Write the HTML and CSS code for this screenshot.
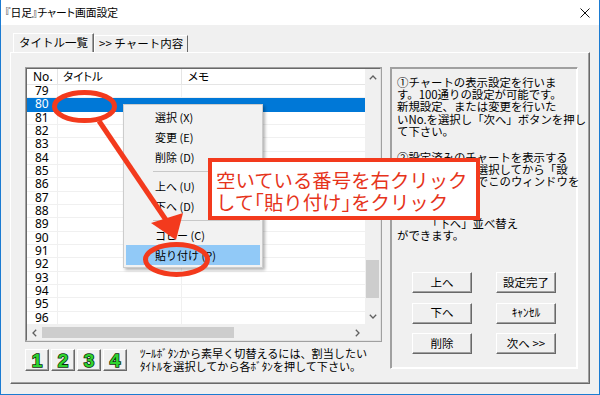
FILE: index.html
```html
<!DOCTYPE html>
<html lang="ja">
<head>
<meta charset="utf-8">
<title>チャート画面設定</title>
<link rel="stylesheet" href="styles.css">
</head>
<body>
<div class="window">
  <div class="titlebar">
    <span class="title">『日足』チャート画面設定</span>
    <svg class="close" width="10" height="10" viewBox="0 0 10 10"><path d="M0.5 0.5L9.5 9.5M9.5 0.5L0.5 9.5" stroke="#111" stroke-width="1"/></svg>
  </div>
  <div class="client">
    <div class="tabs">
      <div class="tab active">タイトル一覧</div>
      <div class="tab">&gt;&gt; チャート内容</div>
    </div>
    <div class="panel">
      <div class="leftcol">
        <div class="listview">
          <div class="lv-inner">
            <div class="lv-main">
              <div class="lv-grid">
                <div class="lv-header"><div class="c1">No.</div><div class="c2">タイトル</div><div class="c3">メモ</div></div>
                <div class="row"><div class="c1">79</div><div class="c2"></div><div class="c3"></div></div>
                <div class="row sel"><div class="c1">80</div><div class="c2"></div><div class="c3"></div></div>
                <div class="row"><div class="c1">81</div><div class="c2"></div><div class="c3"></div></div>
                <div class="row"><div class="c1">82</div><div class="c2"></div><div class="c3"></div></div>
                <div class="row"><div class="c1">83</div><div class="c2"></div><div class="c3"></div></div>
                <div class="row"><div class="c1">84</div><div class="c2"></div><div class="c3"></div></div>
                <div class="row"><div class="c1">85</div><div class="c2"></div><div class="c3"></div></div>
                <div class="row"><div class="c1">86</div><div class="c2"></div><div class="c3"></div></div>
                <div class="row"><div class="c1">87</div><div class="c2"></div><div class="c3"></div></div>
                <div class="row"><div class="c1">88</div><div class="c2"></div><div class="c3"></div></div>
                <div class="row"><div class="c1">89</div><div class="c2"></div><div class="c3"></div></div>
                <div class="row"><div class="c1">90</div><div class="c2"></div><div class="c3"></div></div>
                <div class="row"><div class="c1">91</div><div class="c2"></div><div class="c3"></div></div>
                <div class="row"><div class="c1">92</div><div class="c2"></div><div class="c3"></div></div>
                <div class="row"><div class="c1">93</div><div class="c2"></div><div class="c3"></div></div>
                <div class="row"><div class="c1">94</div><div class="c2"></div><div class="c3"></div></div>
                <div class="row"><div class="c1">95</div><div class="c2"></div><div class="c3"></div></div>
                <div class="row"><div class="c1">96</div><div class="c2"></div><div class="c3"></div></div>
              </div>
              <div class="vscroll">
                <div class="sb-arrow v"><svg width="8" height="5" viewBox="0 0 8 5"><path d="M0.8 4.2L4 1L7.2 4.2" fill="none" stroke="#606060" stroke-width="1.3"/></svg></div>
                <div class="vtrack"><div class="vthumb"></div></div>
                <div class="sb-arrow v"><svg width="8" height="5" viewBox="0 0 8 5"><path d="M0.8 0.8L4 4L7.2 0.8" fill="none" stroke="#606060" stroke-width="1.3"/></svg></div>
              </div>
            </div>
            <div class="hscroll-row">
              <div class="hscroll">
                <div class="sb-arrow h"><svg width="5" height="8" viewBox="0 0 5 8"><path d="M4.2 0.8L1 4L4.2 7.2" fill="none" stroke="#606060" stroke-width="1.3"/></svg></div>
                <div class="htrack"><div class="hthumb"></div></div>
                <div class="sb-arrow h"><svg width="5" height="8" viewBox="0 0 5 8"><path d="M0.8 0.8L4 4L0.8 7.2" fill="none" stroke="#606060" stroke-width="1.3"/></svg></div>
              </div>
              <div class="corner"></div>
            </div>
          </div>
        </div>
        <div class="toolrow">
          <div class="numbtns">
            <div class="numbtn">1</div>
            <div class="numbtn">2</div>
            <div class="numbtn">3</div>
            <div class="numbtn">4</div>
          </div>
          <p class="hint">ﾂｰﾙﾎﾞﾀﾝから素早く切替えるには、割当したい<br>ﾀｲﾄﾙを選択してから各ﾎﾞﾀﾝを押して下さい。</p>
        </div>
      </div>
      <div class="infobox">
        <p class="para p1">①チャートの表示設定を行いま<br>す。100通りの設定が可能です。<br>新規設定、または変更を行いた<br>いNo.を選択し「次へ」ボタンを押し<br>て下さい。</p>
        <p class="para p2">②設定済みのチャートを表示する<br><span class="masked">タイトル番号を</span>選択してから「設<br><span class="masked">定完了」ボタン</span>でこのウィンドウを<br><span class="masked">閉じて下さい。</span></p>
        <p class="para p3"><span class="masked short">③「上へ」</span>「下へ」並べ替え<br>ができます。</p>
        <div class="btngrid">
          <div class="btn">上へ</div>
          <div class="btn">設定完了</div>
          <div class="btn">下へ</div>
          <div class="btn">ｷｬﾝｾﾙ</div>
          <div class="btn">削除</div>
          <div class="btn">次へ &gt;&gt;</div>
        </div>
      </div>
    </div>
  </div>

  <div class="ctxmenu">
    <div class="mi">選択 (X)</div>
    <div class="mi">変更 (E)</div>
    <div class="mi">削除 (D)</div>
    <div class="msep"></div>
    <div class="mi">上へ (U)</div>
    <div class="mi">下へ (D)</div>
    <div class="msep"></div>
    <div class="mi">コピー (C)</div>
    <div class="mi hot">貼り付け (P)</div>
  </div>

  <svg class="annot" width="600" height="395" viewBox="0 0 600 395">
    <ellipse cx="84.5" cy="106.5" rx="30" ry="14" fill="none" stroke="#f33a1d" stroke-width="5"/>
    <line x1="99" y1="121" x2="166" y2="220" stroke="#f33a1d" stroke-width="5"/>
    <polygon points="176,240 151,223 183,213" fill="#f33a1d"/>
    <ellipse cx="176.5" cy="259.5" rx="31" ry="15" fill="none" stroke="#f33a1d" stroke-width="5"/>
  </svg>

  <div class="callout">空いている番号を右クリック<br>して<span class="hb">「</span>貼り付け<span class="hb">」</span>をクリック</div>
</div>
</body>
</html>
```

FILE: styles.css
```css
* { box-sizing: border-box; margin: 0; padding: 0; }
html, body { width: 600px; height: 395px; overflow: hidden; }
body {
  font-family: "Noto Sans CJK JP", "Noto Sans", sans-serif;
  font-size: 11.5px;
  color: #000;
  background: #fff;
}
.window {
  position: relative;
  width: 600px;
  height: 395px;
  border: 1px solid #1b7bd2;
  border-top: 0;
  background: #f0f0f0;
  display: flex;
  flex-direction: column;
}
.titlebar {
  flex: none;
  height: 25px;
  background: #fff;
  display: flex;
  align-items: center;
  justify-content: space-between;
  padding: 0 9px 0 4px;
}
.title { font-size: 10.8px; font-feature-settings: "palt"; line-height: 1; }
.client {
  flex: 1;
  padding: 6px 9px 0 9px;
  display: flex;
  flex-direction: column;
}
.tabs {
  height: 21px;
  display: flex;
  align-items: flex-end;
  padding-left: 3px;
}
.tab {
  height: 17px;
  line-height: 15px;
  padding: 0 4px;
  border: 1px solid;
  border-color: #fff #696969 transparent #fff;
  border-bottom: 0;
  white-space: nowrap;
}
.tab.active {
  height: 19px;
  line-height: 17px;
  padding: 0 5px 0 5px;
  box-shadow: inset -1px 0 #a0a0a0;
}
.panel {
  width: 580px;
  height: 332px;
  border: 1px solid;
  border-color: #fff #696969 #696969 #fff;
  box-shadow: inset -1px -1px #a0a0a0;
  padding: 14px 11px 0 14px;
  display: flex;
  gap: 8px;
}
.leftcol { width: 357px; display: flex; flex-direction: column; }
.listview {
  height: 275px;
  border: 1px solid #a0a0a0;
}
.lv-inner {
  height: 100%;
  border: 1px solid;
  border-color: #696969 #e3e3e3 #e3e3e3 #696969;
  background: #fff;
  display: flex;
  flex-direction: column;
}
.lv-main { height: 256px; display: flex; }
.lv-grid { width: 338px; display: flex; flex-direction: column; font-family: "Noto Sans", "Noto Sans CJK JP", sans-serif; font-size: 12px; }
.lv-header {
  height: 16px;
  display: flex;
  border-bottom: 1px solid #e5e5e5;
  font-family: "Noto Sans CJK JP", "Noto Sans", sans-serif;
  font-size: 11.5px;
  font-feature-settings: "palt";
}
.lv-header > div { display: flex; align-items: center; line-height: 1; }
.c1 { width: 31px; border-right: 1px solid #e5e5e5; padding-left: 8px; }
.c2 { width: 124px; border-right: 1px solid #e5e5e5; padding-left: 5px; }
.c3 { flex: 1; padding-left: 6px; }
.lv-header .c1 { padding-left: 6px; font-family: "Noto Sans", sans-serif; font-size: 12px; }
.row {
  height: 13.333px;
  display: flex;
  border-bottom: 1px solid #f0f0f0;
}
.row > div { display: flex; align-items: center; line-height: 1; border-color: #f0f0f0; }
.row.sel { background: #0078d7; color: #fff; border-bottom-color: #0078d7; }
.row.sel > div { border-color: #0078d7; }
.vscroll { width: 15px; background: #f0f0f0; display: flex; flex-direction: column; }
.sb-arrow { display: flex; align-items: center; justify-content: center; flex: none; }
.sb-arrow.v { height: 17px; }
.sb-arrow.h { width: 15px; }
.vtrack { flex: 1; padding: 0 1px; }
.vthumb { margin-top: 174px; height: 38px; background: #cdcdcd; }
.hscroll-row { height: 15px; display: flex; }
.hscroll { width: 338px; display: flex; background: #f0f0f0; }
.htrack { flex: 1; padding: 2px 0; }
.hthumb { width: 192px; height: 100%; background: #cdcdcd; }
.corner { flex: 1; background: #f0f0f0; }
.toolrow { margin-top: 7px; height: 22px; display: flex; align-items: center; }
.numbtns { display: flex; gap: 2px; }
.numbtn {
  width: 24px;
  height: 22px;
  border: 1px solid;
  border-color: #fff #696969 #696969 #fff;
  box-shadow: inset -1px -1px #a0a0a0;
  background: #f0f0f0;
  display: flex;
  align-items: center;
  justify-content: center;
  font-family: "Liberation Sans", "DejaVu Sans", sans-serif;
  font-weight: bold;
  font-size: 19px;
  color: #2fd42f;
  -webkit-text-stroke: 1.6px #0c2e0c;
  paint-order: stroke fill;
  line-height: 1;
}
.hint {
  margin-left: 13px;
  font-size: 11.1px;
  line-height: 13px;
  white-space: nowrap;
}
.infobox {
  width: 188px;
  height: 302px;
  border: 1px solid;
  border-color: #a0a0a0 #fff #fff #a0a0a0;
  box-shadow: 1px 1px 0 #a0a0a0 inset, -1px -1px 0 #fff inset;
  padding: 8px 4px 14px 6px;
  display: flex;
  flex-direction: column;
  font-size: 11.4px;
  line-height: 12.2px;
}
.para { white-space: nowrap; }
.p2 { margin-top: 14px; }
.p3 { margin-top: 17px; }
.masked { visibility: hidden; }
.masked.short { display: inline-block; width: 30px; overflow: hidden; vertical-align: top; }
.btngrid {
  margin-top: auto;
  margin-left: 15px;
  display: grid;
  grid-template-columns: 60px 60px;
  column-gap: 24px;
  row-gap: 9.5px;
}
.btn {
  height: 21px;
  border: 1px solid;
  border-color: #fff #696969 #696969 #fff;
  box-shadow: inset -1px -1px #a0a0a0;
  background: #f0f0f0;
  display: flex;
  align-items: center;
  justify-content: center;
  font-size: 11.5px;
  line-height: 1;
}
.ctxmenu {
  position: absolute;
  left: 122px;
  top: 104px;
  width: 140px;
  padding: 2px;
  background: #f2f2f2;
  border: 1px solid #cccccc;
  box-shadow: 2px 2px 3px rgba(0,0,0,0.3);
  font-size: 11px;
}
.mi { height: 20px; line-height: 20px; padding-left: 29px; white-space: nowrap; }
.mi.hot { background: #91c9f7; }
.msep { height: 9px; display: flex; align-items: center; padding-left: 27px; }
.msep::before { content: ""; display: block; width: 100%; height: 1px; background: #c8c8c8; }
.annot { position: absolute; left: -1px; top: 0; pointer-events: none; }
.callout {
  position: absolute;
  left: 207px;
  top: 158px;
  width: 272px;
  height: 62px;
  border: 4px solid #f33a1d;
  background: #fff;
  color: #e6341b;
  font-size: 19.4px;
  line-height: 22px;
  padding: 7px 0 0 4px;
  white-space: nowrap;
}
.hb { font-feature-settings: "halt"; }
```
